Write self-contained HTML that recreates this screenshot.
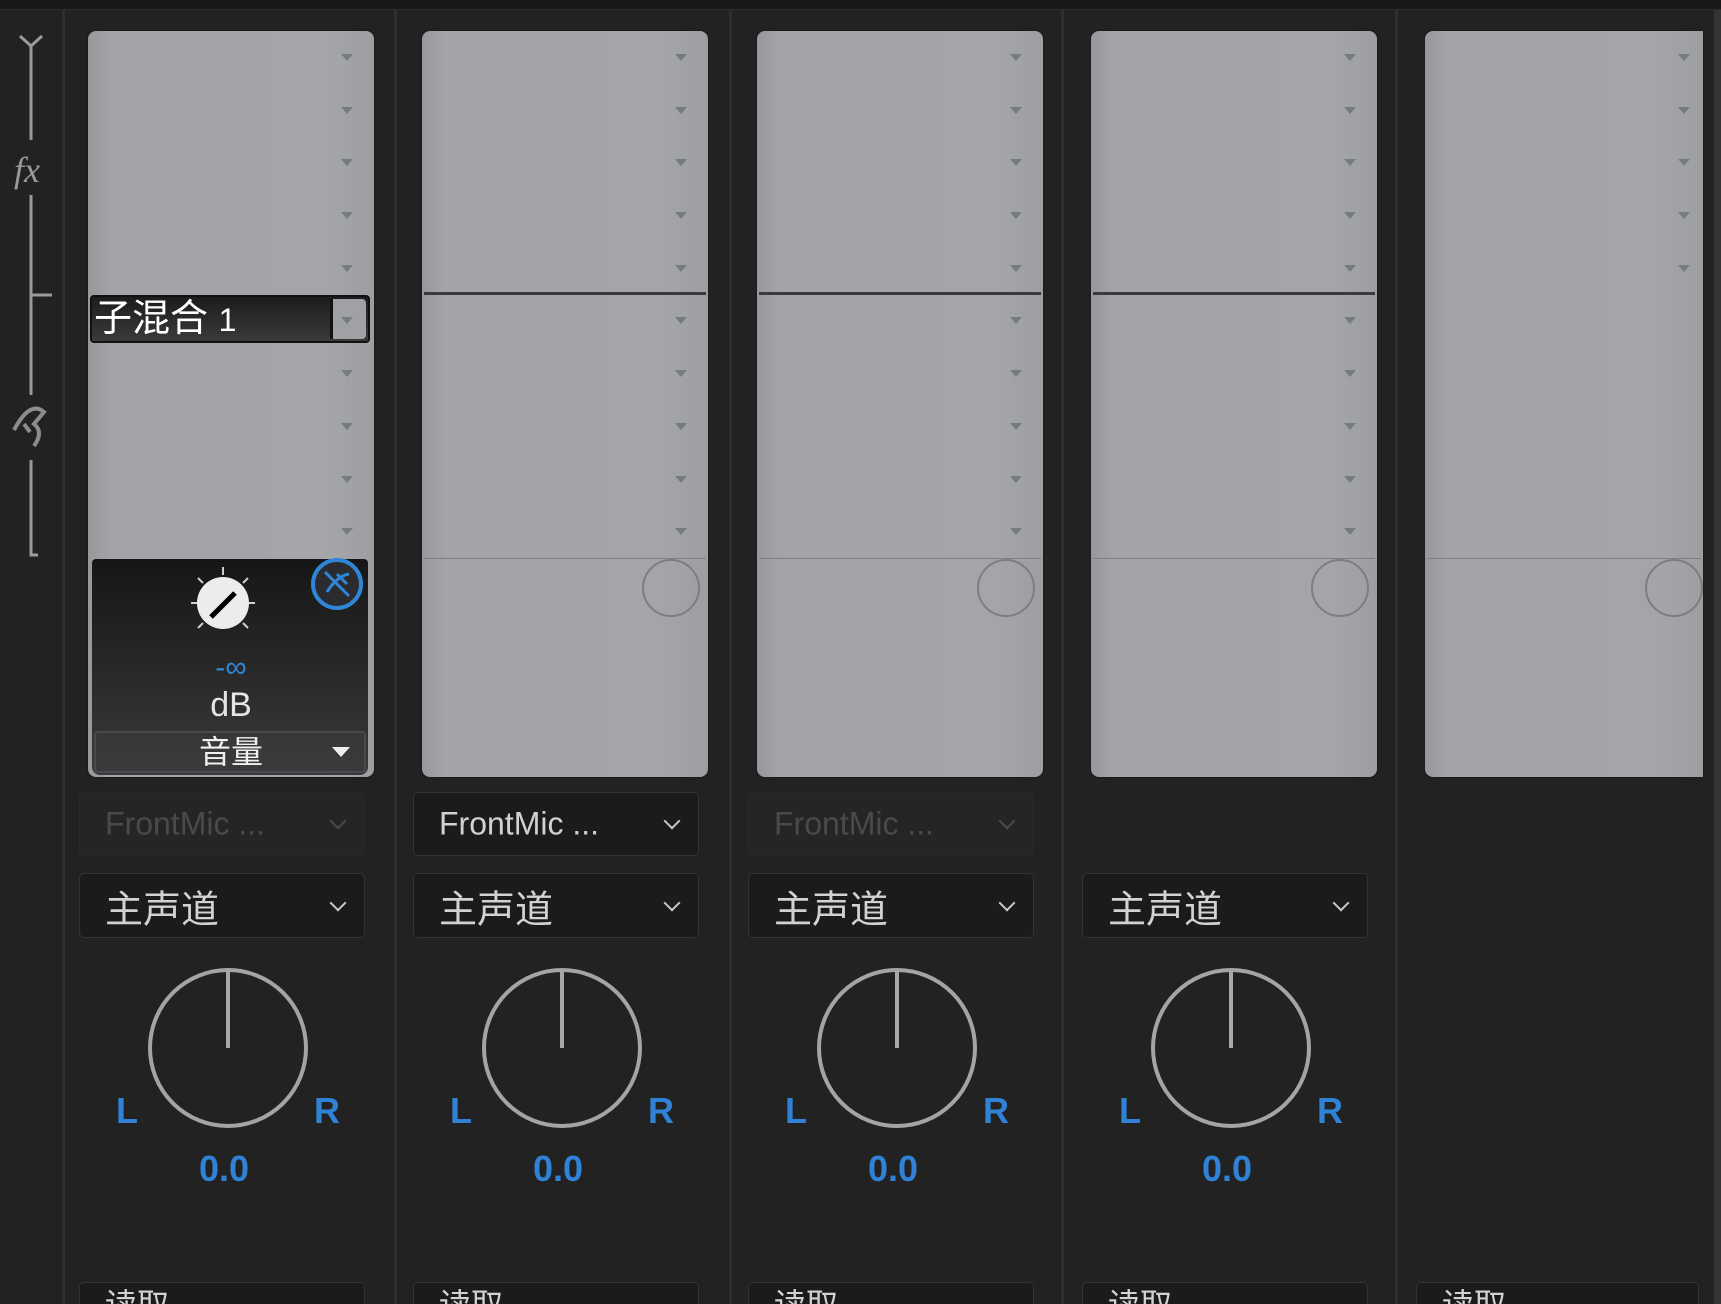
<!DOCTYPE html>
<html style="width:1721px;height:1304px;overflow:hidden"><head><meta charset="utf-8"><style>
*{margin:0;padding:0;box-sizing:border-box}
body{width:1721px;height:1304px;background:#232222;position:relative;overflow:hidden;font-family:"Liberation Sans","Noto Sans CJK SC",sans-serif}
.top{position:absolute;left:0;top:0;width:1721px;height:10px;background:#1a1919;border-bottom:1px solid #2c2b2b}
.sep{position:absolute;top:10px;width:3px;height:1294px;background:#2f2e2e}
.s{position:absolute;left:0;top:0;width:286px;height:1304px}
.pan{position:absolute;left:0;top:31px;width:286px;height:746px;border-radius:8px;background:linear-gradient(90deg,#96989c 0%,#a2a4a8 8%,#a3a5a9 85%,#9c9ea2 100%);box-shadow:0 0 2px #111}
.ar{position:absolute;left:253px;width:12px;height:0;border-left:6px solid transparent;border-right:6px solid transparent;border-top:7px solid #777a7f}
.hl{position:absolute;left:2px;right:2px;height:3px;background:#3a3a3c}
.hl2{position:absolute;left:2px;right:2px;height:1px;background:#7d7f83}
.cir{position:absolute;left:220px;top:528px;width:58px;height:58px;border-radius:50%;border:2px solid #7c7e82}
.dd{position:absolute;left:-9px;width:286px;border-radius:5px;background:#1c1b1b;border:1px solid #343333;color:#d2d2d2}
.dd .t{position:absolute;left:25px;top:50%;transform:translateY(-50%);white-space:nowrap}
.dd .v{position:absolute;right:20px;top:50%;width:12px;height:12px;border-right:2px solid #c8c8c8;border-bottom:2px solid #c8c8c8;transform:translateY(-75%) rotate(45deg)}
.bt{position:absolute;left:-9px;top:1282px;width:286px;height:22px;overflow:hidden;border-radius:5px 5px 0 0;background:#1c1b1b;border:1px solid #343333;border-bottom:none}
.bt span{position:absolute;left:25px;top:6px;font-size:32px;line-height:32px;color:#d2d2d2;white-space:nowrap}
.knob{position:absolute;left:60px;top:968px;width:160px;height:160px;border-radius:50%;border:4px solid #a4a4a6}
.knob:after{content:"";position:absolute;left:74px;top:-2px;width:4px;height:78px;background:#a8a8aa}
.lr{position:absolute;top:1090px;color:#2f82d6;font-size:36px;font-weight:bold}
.val{position:absolute;left:96px;top:1148px;width:80px;text-align:center;color:#2f82d6;font-size:36px;font-weight:bold}
</style></head><body>
<div class="top"></div>
<div class="sep" style="left:62px"></div>
<div class="sep" style="left:394px"></div>
<div class="sep" style="left:729px"></div>
<div class="sep" style="left:1061px"></div>
<div class="sep" style="left:1395px"></div>
<div class="sep" style="left:1714px;width:7px;background:#353434"></div>

<svg style="position:absolute;left:0;top:0" width="64" height="570">
<g stroke="#9a9a9a" stroke-width="3" fill="none">
<path d="M20 36 L31 46 L42 36"/><path d="M31 46 V140"/><path d="M31 195 V295 H52"/><path d="M31 295 V395"/><path d="M31 460 V555 H38"/>
</g>
<text x="14" y="182" fill="#9a9a9a" font-size="36" font-style="italic" font-family="Liberation Serif,serif">fx</text>
<path d="M14 430 Q30 400 44 412 L34 424 Q44 432 34 446 M24 424 L30 432" stroke="#8c8c8c" stroke-width="4" fill="none"/>
</svg>

<div class="s" style="left:88px">
<div class="pan">
<div class="ar" style="top:23px"></div><div class="ar" style="top:76px"></div><div class="ar" style="top:128px"></div><div class="ar" style="top:181px"></div><div class="ar" style="top:234px"></div>
<div style="position:absolute;left:2px;top:264px;width:280px;height:48px;border-radius:4px;background:linear-gradient(#1c1c1c,#3a3a3a);border:2px solid #111"></div>
<div style="position:absolute;left:6px;top:266px;color:#fff;font-size:38px;line-height:44px">子混合 <span style="font-size:32px">1</span></div>
<div style="position:absolute;left:242px;top:268px;width:36px;height:40px;background:#9fa1a5;border-left:3px solid #111;border-radius:0 4px 4px 0"></div>
<div class="ar" style="top:286px"></div>
<div class="ar" style="top:339px"></div><div class="ar" style="top:392px"></div><div class="ar" style="top:445px"></div><div class="ar" style="top:497px"></div>
<div style="position:absolute;left:4px;top:528px;width:276px;height:216px;border-radius:4px 4px 8px 8px;background:linear-gradient(#161616,#3a3a3c)"></div>
<svg style="position:absolute;left:95px;top:532px" width="80" height="80"><g stroke="#cfcfcf" stroke-width="2"><path d="M40 4V12M8 40H16M64 40H72M15 15L20 20M65 15L60 20M15 65L20 60M65 65L60 60"/></g><circle cx="40" cy="40" r="26" fill="#ececec"/><path d="M28 54 L52 30" stroke="#000" stroke-width="5"/></svg>
<div style="position:absolute;left:223px;top:527px;width:52px;height:52px;border-radius:50%;border:4px solid #2f86d8;background:#2a2b2e"><svg width="44" height="44"><path d="M10 10 L34 34 M12 30 Q22 14 34 12 M22 12 L32 22" stroke="#2f86d8" stroke-width="3" fill="none"/></svg></div>
<div style="position:absolute;left:0;width:286px;top:622px;text-align:center;color:#2f86d8;font-size:30px;line-height:30px">-∞</div>
<div style="position:absolute;left:0;width:286px;top:656px;text-align:center;color:#e4e4e4;font-size:34px;line-height:36px">dB</div>
<div style="position:absolute;left:6px;top:700px;width:272px;height:42px;border-radius:4px;border:2px solid #4a4a4c;background:rgba(60,60,62,.5)"></div>
<div style="position:absolute;left:0;width:286px;top:700px;text-align:center;color:#f0f0f0;font-size:32px;line-height:42px">音量</div>
<div style="position:absolute;left:244px;top:716px;border-left:9px solid transparent;border-right:9px solid transparent;border-top:10px solid #eee"></div>
</div>
<div class="dd" style="top:792px;height:64px;background:#262525;border-color:#2a2929;color:#4a4a4a"><span class="t" style="font-size:32px">FrontMic ...</span><span class="v" style="border-color:#4a4a4a"></span></div>
<div class="dd" style="top:873px;height:65px"><span class="t" style="font-size:38px">主声道</span><span class="v"></span></div>
<div class="knob"></div><div class="lr" style="left:28px">L</div><div class="lr" style="left:226px">R</div><div class="val">0.0</div>
<div class="bt"><span>读取</span></div>
</div>

<div class="s" style="left:422px">
<div class="pan">
<div class="ar" style="top:23px"></div><div class="ar" style="top:76px"></div><div class="ar" style="top:128px"></div><div class="ar" style="top:181px"></div><div class="ar" style="top:234px"></div>
<div class="hl" style="top:261px"></div>
<div class="ar" style="top:286px"></div><div class="ar" style="top:339px"></div><div class="ar" style="top:392px"></div><div class="ar" style="top:445px"></div><div class="ar" style="top:497px"></div>
<div class="hl2" style="top:527px"></div><div class="cir" style="top:528px"></div>
</div>
<div class="dd" style="top:792px;height:64px"><span class="t" style="font-size:32px">FrontMic ...</span><span class="v"></span></div>
<div class="dd" style="top:873px;height:65px"><span class="t" style="font-size:38px">主声道</span><span class="v"></span></div>
<div class="knob"></div><div class="lr" style="left:28px">L</div><div class="lr" style="left:226px">R</div><div class="val">0.0</div>
<div class="bt"><span>读取</span></div>
</div>

<div class="s" style="left:757px">
<div class="pan">
<div class="ar" style="top:23px"></div><div class="ar" style="top:76px"></div><div class="ar" style="top:128px"></div><div class="ar" style="top:181px"></div><div class="ar" style="top:234px"></div>
<div class="hl" style="top:261px"></div>
<div class="ar" style="top:286px"></div><div class="ar" style="top:339px"></div><div class="ar" style="top:392px"></div><div class="ar" style="top:445px"></div><div class="ar" style="top:497px"></div>
<div class="hl2" style="top:527px"></div><div class="cir" style="top:528px"></div>
</div>
<div class="dd" style="top:792px;height:64px;background:#262525;border-color:#2a2929;color:#4a4a4a"><span class="t" style="font-size:32px">FrontMic ...</span><span class="v" style="border-color:#4a4a4a"></span></div>
<div class="dd" style="top:873px;height:65px"><span class="t" style="font-size:38px">主声道</span><span class="v"></span></div>
<div class="knob"></div><div class="lr" style="left:28px">L</div><div class="lr" style="left:226px">R</div><div class="val">0.0</div>
<div class="bt"><span>读取</span></div>
</div>

<div class="s" style="left:1091px">
<div class="pan">
<div class="ar" style="top:23px"></div><div class="ar" style="top:76px"></div><div class="ar" style="top:128px"></div><div class="ar" style="top:181px"></div><div class="ar" style="top:234px"></div>
<div class="hl" style="top:261px"></div>
<div class="ar" style="top:286px"></div><div class="ar" style="top:339px"></div><div class="ar" style="top:392px"></div><div class="ar" style="top:445px"></div><div class="ar" style="top:497px"></div>
<div class="hl2" style="top:527px"></div><div class="cir" style="top:528px"></div>
</div>
<div class="dd" style="top:873px;height:65px"><span class="t" style="font-size:38px">主声道</span><span class="v"></span></div>
<div class="knob"></div><div class="lr" style="left:28px">L</div><div class="lr" style="left:226px">R</div><div class="val">0.0</div>
<div class="bt"><span>读取</span></div>
</div>

<div class="s" style="left:1425px;width:278px">
<div class="pan" style="width:278px;border-radius:8px 0 0 8px">
<div class="ar" style="top:23px"></div><div class="ar" style="top:76px"></div><div class="ar" style="top:128px"></div><div class="ar" style="top:181px"></div><div class="ar" style="top:234px"></div>
<div class="hl2" style="top:527px"></div><div class="cir" style="top:528px"></div>
</div>
<div class="bt" style="width:283px"><span>读取</span></div>
</div>
</body></html>
